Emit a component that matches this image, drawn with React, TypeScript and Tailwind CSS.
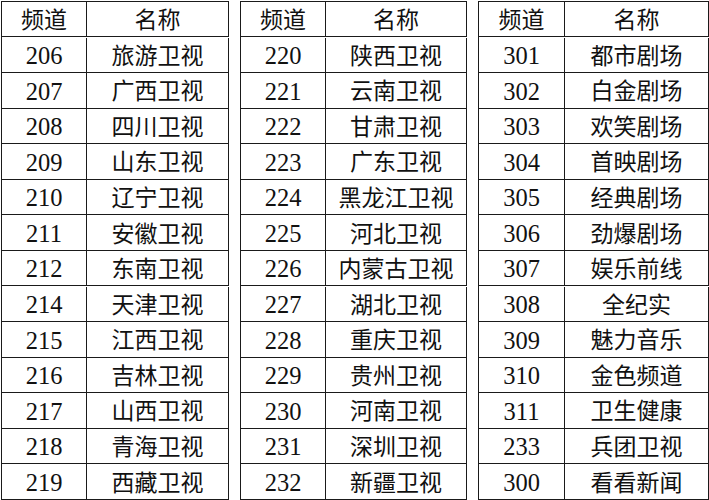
const tables: [string, string][][] = [
  [
    ["206", "旅游卫视"],
    ["207", "广西卫视"],
    ["208", "四川卫视"],
    ["209", "山东卫视"],
    ["210", "辽宁卫视"],
    ["211", "安徽卫视"],
    ["212", "东南卫视"],
    ["214", "天津卫视"],
    ["215", "江西卫视"],
    ["216", "吉林卫视"],
    ["217", "山西卫视"],
    ["218", "青海卫视"],
    ["219", "西藏卫视"],
  ],
  [
    ["220", "陕西卫视"],
    ["221", "云南卫视"],
    ["222", "甘肃卫视"],
    ["223", "广东卫视"],
    ["224", "黑龙江卫视"],
    ["225", "河北卫视"],
    ["226", "内蒙古卫视"],
    ["227", "湖北卫视"],
    ["228", "重庆卫视"],
    ["229", "贵州卫视"],
    ["230", "河南卫视"],
    ["231", "深圳卫视"],
    ["232", "新疆卫视"],
  ],
  [
    ["301", "都市剧场"],
    ["302", "白金剧场"],
    ["303", "欢笑剧场"],
    ["304", "首映剧场"],
    ["305", "经典剧场"],
    ["306", "劲爆剧场"],
    ["307", "娱乐前线"],
    ["308", "全纪实"],
    ["309", "魅力音乐"],
    ["310", "金色频道"],
    ["311", "卫生健康"],
    ["233", "兵团卫视"],
    ["300", "看看新闻"],
  ],
];

const widths = [
  "grid-cols-[85px_142px]",
  "grid-cols-[85px_141px]",
  "grid-cols-[86px_144px]",
];

function ChannelTable({ rows, cols }: { rows: [string, string][]; cols: string }) {
  const all: [string, string][] = [["频道", "名称"], ...rows];
  return (
    <div className={`grid ${cols} border-l-[1.5px] border-t-[1.5px] border-[#1a1a1a]`}>
      {all.map(([num, name], i) => (
        <div key={i} className="contents">
          <div
            className={`h-[35.4px] flex items-center justify-center pt-[3px] border-r-[1.5px] border-b-[1.5px] border-[#1a1a1a] ${
              i === 0 ? "" : "text-[24.5px]"
            }`}
          >
            {num}
          </div>
          <div className="h-[35.4px] flex items-center justify-center pt-[3px] border-r-[1.5px] border-b-[1.5px] border-[#1a1a1a]">
            {name}
          </div>
        </div>
      ))}
    </div>
  );
}

export default function App() {
  return (
    <div className="w-[709px] h-[500px] bg-white overflow-hidden pl-[1px] pt-[1px] flex gap-[11px] text-[23px] leading-none text-[#111] font-['Liberation_Serif','Noto_Sans_CJK_SC',serif]">
      {tables.map((rows, i) => (
        <ChannelTable key={i} rows={rows} cols={widths[i]} />
      ))}
    </div>
  );
}
